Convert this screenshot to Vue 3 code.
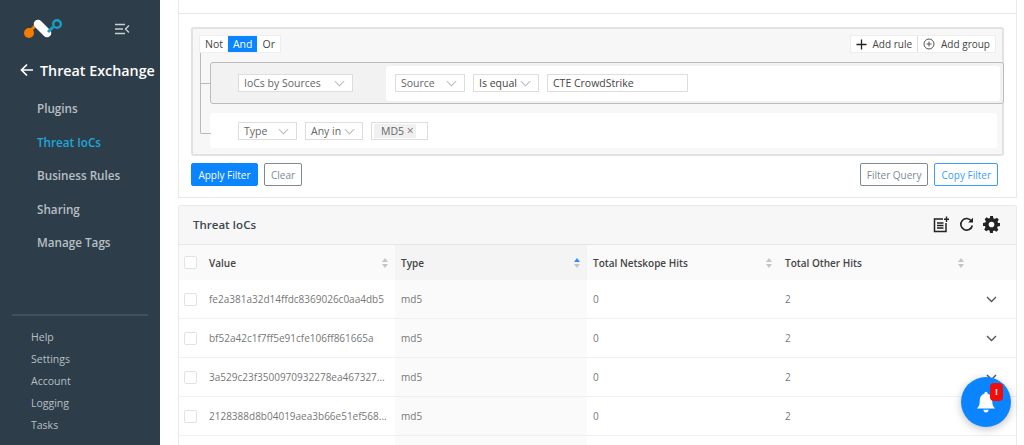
<template>
  <div class="page">
    <aside class="sidebar">
      <div class="brand">
        <svg class="logo" width="50" height="30" viewBox="0 0 50 30">
          <path d="M5 18 L13 10" stroke="#f57c00" stroke-width="3" fill="none" />
          <circle cx="5" cy="19" r="5" fill="#f57c00" />
          <path d="M14 10 L23 19" stroke="#fff" stroke-width="8.5" stroke-linecap="round" fill="none" />
          <path d="M24 18 L29 13" stroke="#1a9fc4" stroke-width="3" fill="none" />
          <circle cx="33" cy="10" r="3.8" fill="none" stroke="#1a9fc4" stroke-width="2.4" />
        </svg>
        <svg class="collapse" width="15" height="12" viewBox="0 0 15 12">
          <path d="M0 1.500H10M0 6H8M0 10.500H10" stroke="#c9d0d4" stroke-width="1.4" fill="none" />
          <path d="M14 2.500L10.500 6L14 9.500" stroke="#c9d0d4" stroke-width="1.4" fill="none" />
        </svg>
      </div>
      <div class="section">
        <svg width="14" height="14" viewBox="0 0 14 14">
          <path d="M13 7H2M7 1.500L1.500 7L7 12.500" stroke="#fff" stroke-width="1.7" fill="none" />
        </svg>
        <span>Threat Exchange</span>
      </div>
      <nav class="nav">
        <a v-for="item in navItems" :key="item" :class="{ active: item === 'Threat IoCs' }">{{ item }}</a>
      </nav>
      <div class="bottom">
        <a v-for="item in bottomItems" :key="item">{{ item }}</a>
      </div>
    </aside>

    <main class="main">
      <section class="card top-card"></section>

      <section class="card filter-card">
        <div class="query">
          <div class="query-head">
            <div class="toggle">
              <span>Not</span>
              <span class="on">And</span>
              <span>Or</span>
            </div>
            <div class="adders">
              <span>
                <svg width="11" height="11" viewBox="0 0 11 11"><path d="M5.500 0.500V10.500M0.500 5.500H10.500" stroke="#222" stroke-width="1.3" /></svg>
                Add rule
              </span>
              <span>
                <svg width="12" height="12" viewBox="0 0 12 12"><circle cx="6" cy="6" r="5" fill="none" stroke="#555" /><path d="M6 3.500V8.500M3.500 6H8.500" stroke="#555" /></svg>
                Add group
              </span>
            </div>
          </div>

          <div class="rules">
            <div class="rule-group">
              <div class="select w115">IoCs by Sources<i class="caret"></i></div>
              <div class="rule-body">
                <div class="select w70">Source<i class="caret"></i></div>
                <div class="select w66 dark">Is equal<i class="caret"></i></div>
                <div class="input">CTE CrowdStrike</div>
              </div>
            </div>
            <div class="rule-row">
              <div class="select w59">Type<i class="caret"></i></div>
              <div class="select w58">Any in<i class="caret"></i></div>
              <div class="multi"><span class="tag">MD5 <b>×</b></span></div>
            </div>
          </div>
        </div>

        <div class="actions">
          <button class="btn primary">Apply Filter</button>
          <button class="btn plain">Clear</button>
          <span class="grow"></span>
          <button class="btn plain">Filter Query</button>
          <button class="btn outline">Copy Filter</button>
        </div>
      </section>

      <section class="card table-card">
        <header class="table-title">
          <h2>Threat IoCs</h2>
          <div class="tools">
            <svg width="17" height="17" viewBox="0 0 17 17">
              <path d="M10 3H1.500V15.500H13V7" fill="none" stroke="#222" stroke-width="1.5" />
              <path d="M4 7H10.500M4 9.500H10.500M4 12H10.500" stroke="#222" stroke-width="1.3" />
              <path d="M13.500 0.500V6M11 3.200H16" stroke="#222" stroke-width="1.4" />
            </svg>
            <svg width="15" height="15" viewBox="0 0 15 15">
              <path d="M12.500 4.200A5.800 5.800 0 1 0 13.300 8.500" fill="none" stroke="#222" stroke-width="1.6" />
              <path d="M9.200 5.400H14V0.800Z" fill="#222" />
            </svg>
            <svg width="17" height="17" viewBox="0 0 24 24">
              <path fill="#222" fill-rule="evenodd" d="M10 0h4l.7 3.300 1.900.8 2.900-1.800 2.800 2.800-1.800 2.900.8 1.900L24 10v4l-3.300.7-.8 1.900 1.800 2.900-2.800 2.800-2.900-1.800-1.900.8L14 24h-4l-.7-3.300-1.900-.8-2.900 1.800-2.800-2.800 1.800-2.900-.8-1.900L0 14v-4l3.300-.7.8-1.900-1.800-2.900 2.800-2.800 2.900 1.800 1.900-.8zM12 8a4 4 0 1 0 0 8 4 4 0 0 0 0-8z" />
            </svg>
          </div>
        </header>

        <div class="grid head">
          <div class="cell check"><i class="box"></i></div>
          <div class="cell sortable" v-for="col in columns" :key="col.label" :class="{ sorted: col.sorted }">
            <span>{{ col.label }}</span>
            <span class="sort" :class="{ up: col.sorted }"><i></i><i></i></span>
          </div>
          <div class="cell"></div>
        </div>

        <div class="grid row" v-for="row in rows" :key="row.value">
          <div class="cell check"><i class="box"></i></div>
          <div class="cell">{{ row.value }}</div>
          <div class="cell sorted">md5</div>
          <div class="cell">0</div>
          <div class="cell">2</div>
          <div class="cell expand">
            <svg width="11" height="7" viewBox="0 0 11 7"><path d="M1 1L5.500 5.500L10 1" fill="none" stroke="#555" stroke-width="1.4" /></svg>
          </div>
        </div>

        <!-- next row starts right at the bottom edge of the window -->
        <div class="grid row">
          <div class="cell"></div>
          <div class="cell"></div>
          <div class="cell sorted"></div>
        </div>
      </section>
    </main>

    <button class="fab">
      <svg width="20" height="24" viewBox="0 0 24 26" preserveAspectRatio="none">
        <path fill="#fff" d="M12 2a2 2 0 0 1 2 2c4 1 5.500 4.500 5.500 8 0 4 1 6 3.500 8H1c2.500-2 3.500-4 3.500-8 0-3.500 1.500-7 5.500-8a2 2 0 0 1 2-2zM9 21.500h6a3 3 0 0 1-6 0z" />
      </svg>
      <span class="badge">!</span>
    </button>
  </div>
</template>

<script setup>
const navItems = ['Plugins', 'Threat IoCs', 'Business Rules', 'Sharing', 'Manage Tags'];
const bottomItems = ['Help', 'Settings', 'Account', 'Logging', 'Tasks'];

const columns = [
  { label: 'Value' },
  { label: 'Type', sorted: true },
  { label: 'Total Netskope Hits' },
  { label: 'Total Other Hits' },
];

const rows = [
  { value: 'fe2a381a32d14ffdc8369026c0aa4db5' },
  { value: 'bf52a42c1f7ff5e91cfe106ff861665a' },
  { value: '3a529c23f3500970932278ea467327...' },
  { value: '2128388d8b04019aea3b66e51ef568...' },
];
</script>

<style>
html,
body {
  margin: 0;
  background: #fff;
  overflow: hidden;
}
</style>

<style scoped>
.page {
  position: relative;
  display: flex;
  width: 1024px;
  height: 445px;
  overflow: hidden;
  font-family: "Open Sans", sans-serif;
  color: #555;
}

.sidebar {
  flex: 0 0 160px;
  display: flex;
  flex-direction: column;
  background: #2d3e4a;
  box-sizing: border-box;
  height: 445px;
}

.brand {
  display: flex;
  align-items: center;
  height: 30px;
  margin-top: 14px;
  padding-left: 24px;
}

.logo {
  margin-right: 41px;
}

.section {
  display: flex;
  align-items: center;
  gap: 6px;
  height: 24px;
  margin-top: 14px;
  padding-left: 20px;
  font-size: 14.3px;
  font-weight: 600;
  color: #fff;
  white-space: nowrap;
}

.nav {
  display: flex;
  flex-direction: column;
  margin-top: 10px;
  padding-left: 37px;
}

.nav a {
  height: 33.5px;
  line-height: 33.5px;
  font-size: 11.7px;
  font-weight: 600;
  color: #b8bfc4;
}

.nav a.active {
  color: #1ea7d8;
}

.bottom {
  display: flex;
  flex-direction: column;
  margin: auto 12px 9px;
  padding: 10px 0 0 19px;
  border-top: 2px solid #3f515d;
}

.bottom a {
  height: 22px;
  line-height: 22px;
  font-size: 10.5px;
  color: #b8bfc4;
}

.main {
  flex: 1;
  min-width: 0;
  height: 445px;
  padding: 0 7px 0 18px;
  display: flex;
  flex-direction: column;
  background: #fff;
}

.card {
  border: 1px solid #e9e9e9;
  background: #fff;
  flex: none;
}

.top-card {
  height: 13px;
  border-top: 0;
  border-bottom-width: 2px;
  margin-bottom: -1px;
}

.filter-card {
  height: 184px;
  margin-bottom: 7px;
  box-sizing: border-box;
  padding: 13px 12px 0;
  border-top: 0;
}

.query {
  height: 129px;
  box-sizing: border-box;
  border: 2px solid #e2e2e2;
  border-radius: 3px;
  background: #f7f7f7;
  padding: 6px 0 0 6px;
  position: relative;
}

.query::before {
  content: "";
  position: absolute;
  left: 7px;
  top: 24px;
  width: 10px;
  height: 80px;
  border-left: 1px solid #bbb;
  border-bottom: 1px solid #bbb;
  border-radius: 0 0 0 2px;
}

.query-head {
  display: flex;
  justify-content: space-between;
  padding-right: 6px;
  height: 18px;
  font-size: 10.5px;
}

.toggle,
.adders {
  display: flex;
  background: #fff;
  border: 1px solid #eee;
  box-sizing: border-box;
  color: #444;
}

.toggle span {
  padding: 0 5px;
  line-height: 16px;
}

.toggle .on {
  background: #0a84ff;
  color: #fff;
}

.adders {
  font-size: 10px;
}

.adders span {
  display: flex;
  align-items: center;
  gap: 6px;
  padding: 0 5px;
  line-height: 16px;
  white-space: nowrap;
}

.adders span + span {
  border-left: 1px solid #ddd;
}

.rules {
  margin-top: 9px;
  margin-left: 11px;
  font-size: 10.5px;
}

.rule-group {
  display: flex;
  align-items: center;
  height: 42px;
  box-sizing: border-box;
  margin-right: -2px;
  padding: 0 3px 0 27px;
  background: #f2f2f2;
  border: 1px solid #bcbcbc;
  border-radius: 3px;
  position: relative;
}

.rule-group::before {
  content: "";
  position: absolute;
  left: -10px;
  top: 20px;
  width: 9px;
  border-top: 1px solid #bbb;
}

.rule-body {
  flex: 1;
  display: flex;
  align-items: center;
  gap: 8px;
  height: 35px;
  margin-left: 33px;
  padding-left: 9px;
  background: #fff;
  border-radius: 3px;
}

.rule-row {
  display: flex;
  align-items: center;
  gap: 8px;
  height: 35px;
  margin: 9px 5px 0 0;
  padding-left: 28px;
  background: #fff;
  border-radius: 3px;
}

.select,
.input,
.multi {
  position: relative;
  height: 18px;
  box-sizing: border-box;
  border: 1px solid #ddd;
  background: #fff;
  line-height: 16px;
  padding-left: 5px;
  color: #666;
  white-space: nowrap;
  flex: none;
}

.select.dark,
.input {
  color: #444;
}

.caret {
  position: absolute;
  right: 9px;
  top: 3px;
  width: 6px;
  height: 6px;
  border-right: 1px solid #bbb;
  border-bottom: 1px solid #bbb;
  transform: rotate(45deg);
}

.w115 { width: 115px; }
.w70 { width: 70px; }
.w66 { width: 66px; }
.w59 { width: 59px; }
.w58 { width: 58px; }

.input {
  width: 141px;
}

.multi {
  width: 57px;
  padding-left: 2px;
}

.tag {
  display: inline-block;
  padding: 0 2px 0 7px;
  line-height: 14px;
  margin-top: 1px;
  background: #f0f0f0;
  vertical-align: top;
}

.tag b {
  font-weight: 400;
  font-size: 12px;
  color: #777;
}

.actions {
  display: flex;
  align-items: center;
  gap: 6px;
  margin-top: 7px;
  padding-right: 6px;
}

.grow {
  flex: 1;
}

.btn {
  height: 23px;
  padding: 0 6px;
  border-radius: 2px;
  font-family: inherit;
  font-size: 10px;
  background: #fff;
}

.btn.primary {
  width: 67px;
  background: #0a84ff;
  border: 1px solid #0a84ff;
  color: #fff;
}

.btn.plain {
  border: 1px solid #7d8a94;
  color: #7d8a94;
}

.btn.outline {
  border: 1px solid #3c9bff;
  color: #3c9bff;
}

.table-card {
  border-radius: 3px 3px 0 0;
  border-bottom: 0;
  flex: 1;
  overflow: hidden;
}

.table-title {
  display: flex;
  align-items: center;
  justify-content: space-between;
  height: 37px;
  padding: 0 16px 1px 14px;
  background: #f7f7f7;
  border-bottom: 1px solid #e6e6e6;
}

.table-title h2 {
  margin: 0;
  font-size: 11.5px;
  font-weight: 600;
  color: #3c4650;
}

.tools {
  display: flex;
  align-items: center;
  gap: 9px;
}

.grid {
  display: grid;
  grid-template-columns: 24px 192px 192px 192px 192px 1fr;
  font-size: 10px;
}

.head {
  height: 35px;
  background: #fafafa;
  font-weight: 600;
  color: #444;
}

.row {
  height: 39px;
  border-bottom: 1px solid #f0f0f0;
  box-sizing: border-box;
  color: #777;
}

.cell {
  display: flex;
  align-items: center;
  padding: 0 6px;
  min-width: 0;
  white-space: nowrap;
}

.check {
  padding: 0 0 0 5px;
}

.box {
  display: block;
  width: 11px;
  height: 11px;
  background: #fff;
  border: 1px solid #e2e2e2;
  border-radius: 2px;
}

.sortable {
  justify-content: space-between;
  padding-right: 7px;
}

.head .sorted {
  background: #f4f4f4;
}

.row .sorted {
  background: #fafafa;
}

.sort {
  display: flex;
  flex-direction: column;
  gap: 2px;
}

.sort i {
  display: block;
  width: 0;
  height: 0;
  border-left: 3.5px solid transparent;
  border-right: 3.5px solid transparent;
  border-bottom: 4px solid #c4c4c4;
}

.sort i + i {
  border-bottom: 0;
  border-top: 4px solid #c4c4c4;
}

.sort.up i:first-child {
  border-bottom-color: #2f8cff;
}

.expand {
  justify-content: flex-end;
  padding-right: 19px;
}

.fab {
  position: absolute;
  left: 961px;
  top: 377px;
  width: 50px;
  height: 50px;
  padding: 0;
  border: 0;
  border-radius: 50%;
  background: #0a84ff;
  box-shadow: 0 2px 8px rgba(0, 0, 0, 0.25);
  display: flex;
  align-items: center;
  justify-content: center;
}

.badge {
  position: absolute;
  left: 29px;
  top: 6px;
  width: 13px;
  height: 18px;
  border-radius: 4px;
  background: #f20d0d;
  color: #fff;
  font-size: 9px;
  font-weight: 700;
  line-height: 18px;
  text-align: center;
}
</style>
